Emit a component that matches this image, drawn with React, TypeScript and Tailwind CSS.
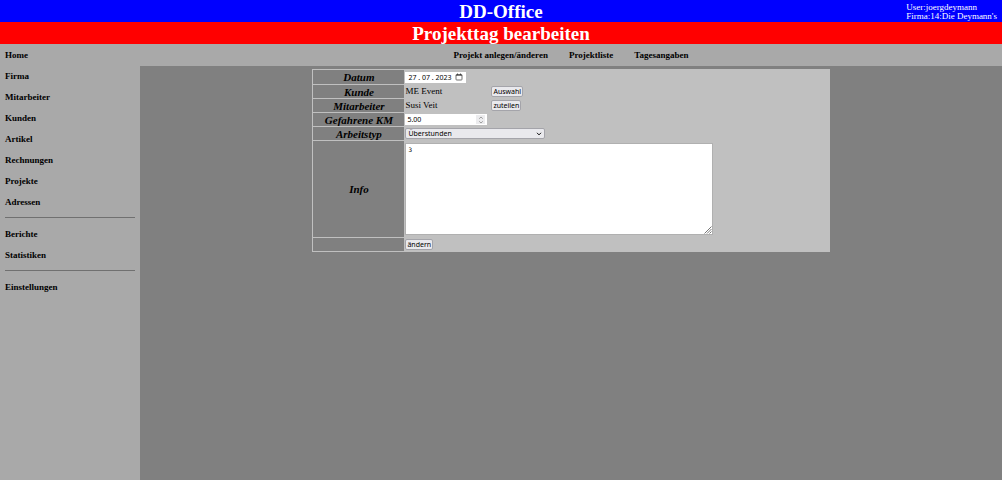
import type { ReactNode } from 'react';

const groups = [
  ['Home', 'Firma', 'Mitarbeiter', 'Kunden', 'Artikel', 'Rechnungen', 'Projekte', 'Adressen'],
  ['Berichte', 'Statistiken'],
  ['Einstellungen'],
];

const topLinks = ['Projekt anlegen/änderen', 'Projektliste', 'Tagesangaben'];

const control = "font-['Noto_Sans',sans-serif] text-[7px] leading-[9px] text-black";

function Button({ children, type = 'button' }: { children: ReactNode; type?: 'button' | 'submit' }) {
  return (
    <button
      type={type}
      className={`${control} h-[11px] rounded-[2px] border border-[#a4a4aa] bg-[#e9e9ed] px-px`}
    >
      {children}
    </button>
  );
}

function Row({ label, id, height, children }: { label?: string; id?: string; height: string; children: ReactNode }) {
  return (
    <tr className={height}>
      <th scope="row" className="bg-[#808080] p-0 text-center align-middle text-[11px] leading-[12px] font-bold italic">
        {label && (id ? <label htmlFor={id}>{label}</label> : label)}
      </th>
      <td className="p-0 align-middle">{children}</td>
    </tr>
  );
}

export default function App() {
  return (
    <div className="flex min-h-screen flex-col bg-[#808080] font-['Liberation_Serif',serif] text-black">
      <header className="grid h-[22px] grid-cols-[1fr_auto_1fr] items-center bg-[#0000ff] text-white">
        <h1 className="col-start-2 pt-[2px] text-[19px] leading-[20px] font-bold">DD-Office</h1>
        <div className="justify-self-end pt-px pr-[5px] text-[9px] leading-[9px]">
          <p>User:joergdeymann</p>
          <p>Firma:14:Die Deymann's</p>
        </div>
      </header>
      <h2 className="bg-[#ff0000] pt-[2px] text-center text-[19px] leading-[20px] font-bold text-white">
        Projekttag bearbeiten
      </h2>
      <div className="flex flex-1">
        <nav aria-label="Hauptmenü" className="w-[140px] shrink-0 bg-[#a9a9a9] px-[5px] pt-px text-[9px] font-bold">
          {groups.map((group, i) => (
            <div key={group[0]}>
              {i > 0 && <hr className="mt-[4px] mb-[6px] border-t border-[#707070]" />}
              {group.map((item) => (
                <a key={item} href="#" className="block leading-[21px]">
                  {item}
                </a>
              ))}
            </div>
          ))}
        </nav>
        <div className="min-w-0 flex-1">
          <nav aria-label="Projekte" className="flex h-[22px] justify-center gap-[21px] bg-[#a9a9a9] text-[9px] leading-[22px] font-bold">
            {topLinks.map((item) => (
              <a key={item} href="#">
                {item}
              </a>
            ))}
          </nav>
          <main className="pt-[3px]">
            <form onSubmit={(e) => e.preventDefault()}>
              <table className="mx-auto w-3/5 table-fixed border-separate border-spacing-px bg-[#c0c0c0]">
                <colgroup>
                  <col className="w-[91px]" />
                  <col />
                </colgroup>
                <tbody>
                  <Row label="Datum" id="datum" height="h-[14px]">
                    <div className="flex h-[11px] w-[61px] items-center bg-white px-[3px]">
                      <input
                        id="datum"
                        type="text"
                        defaultValue="27 . 07 . 2023"
                        className="w-[47px] font-['Noto_Sans',sans-serif] text-[7px] leading-[9px] outline-none"
                      />
                      <button type="button" aria-label="Kalender" className="ml-auto">
                        <svg viewBox="0 0 8 8" className="size-[8px]" fill="none" stroke="#333">
                          <rect x="1" y="1.5" width="6" height="5.5" rx="0.7" strokeWidth="0.7" />
                          <path d="M1 2.3h6M2.5 0.5v1.5M5.5 0.5v1.5" strokeWidth="0.8" />
                        </svg>
                      </button>
                    </div>
                  </Row>
                  <Row label="Kunde" height="h-[13px]">
                    <div className="flex items-center text-[9px] leading-[11px]">
                      <span className="w-[86px]">ME Event</span>
                      <Button>Auswahl</Button>
                    </div>
                  </Row>
                  <Row label="Mitarbeiter" height="h-[13px]">
                    <div className="flex items-center text-[9px] leading-[11px]">
                      <span className="w-[86px]">Susi Veit</span>
                      <Button>zuteilen</Button>
                    </div>
                  </Row>
                  <Row label="Gefahrene KM" id="km" height="h-[13px]">
                    <div className="flex h-[11px] w-[82px] items-center bg-white px-[2px]">
                      <input
                        id="km"
                        type="number"
                        step="0.01"
                        defaultValue="5.00"
                        className={`${control} min-w-0 flex-1 [appearance:textfield] outline-none`}
                      />
                      <span className="flex h-[9px] w-[9px] items-center justify-center bg-[#ececee]">
                        <svg viewBox="0 0 6 8" className="h-[8px] w-[6px]" fill="none" stroke="#888" strokeWidth="0.8">
                          <path d="M1.2 2.7 3 1l1.8 1.7M1.2 5.3 3 7l1.8-1.7" />
                        </svg>
                      </span>
                    </div>
                  </Row>
                  <Row label="Arbeitstyp" id="typ" height="h-[13px]">
                    <div className="grid w-[140px] items-center">
                      <select
                        id="typ"
                        defaultValue="Überstunden"
                        className={`${control} col-start-1 row-start-1 h-[11px] appearance-none rounded-[2px] border border-[#a4a4aa] bg-[#e9e9ed] pl-[2px]`}
                      >
                        <option>Überstunden</option>
                      </select>
                      <svg
                        viewBox="0 0 6 4"
                        className="pointer-events-none col-start-1 row-start-1 mr-[3px] h-[4px] w-[6px] justify-self-end"
                        fill="none"
                        stroke="#111"
                      >
                        <path d="M1 0.8 3 2.9 5 0.8" />
                      </svg>
                    </div>
                  </Row>
                  <Row label="Info" id="info" height="h-[96px]">
                    <div className="grid w-[308px]">
                      <textarea
                        id="info"
                        defaultValue="3"
                        className="col-start-1 row-start-1 block h-[92px] resize-none border border-[#b0b0b0] bg-white px-[2px] py-px font-['DejaVu_Sans_Mono',monospace] text-[6px] leading-[9px] outline-none"
                      />
                      <svg
                        viewBox="0 0 8 8"
                        className="pointer-events-none col-start-1 row-start-1 mr-px mb-px size-[8px] self-end justify-self-end"
                        stroke="#666"
                        strokeWidth="0.9"
                      >
                        <path d="M0.5 7.5l7-7M3 7.5l4.5-4.5M5.5 7.5l2-2" />
                      </svg>
                    </div>
                  </Row>
                  <Row height="h-[13px]">
                    <div className="flex">
                      <Button type="submit">ändern</Button>
                    </div>
                  </Row>
                </tbody>
              </table>
            </form>
          </main>
        </div>
      </div>
    </div>
  );
}
